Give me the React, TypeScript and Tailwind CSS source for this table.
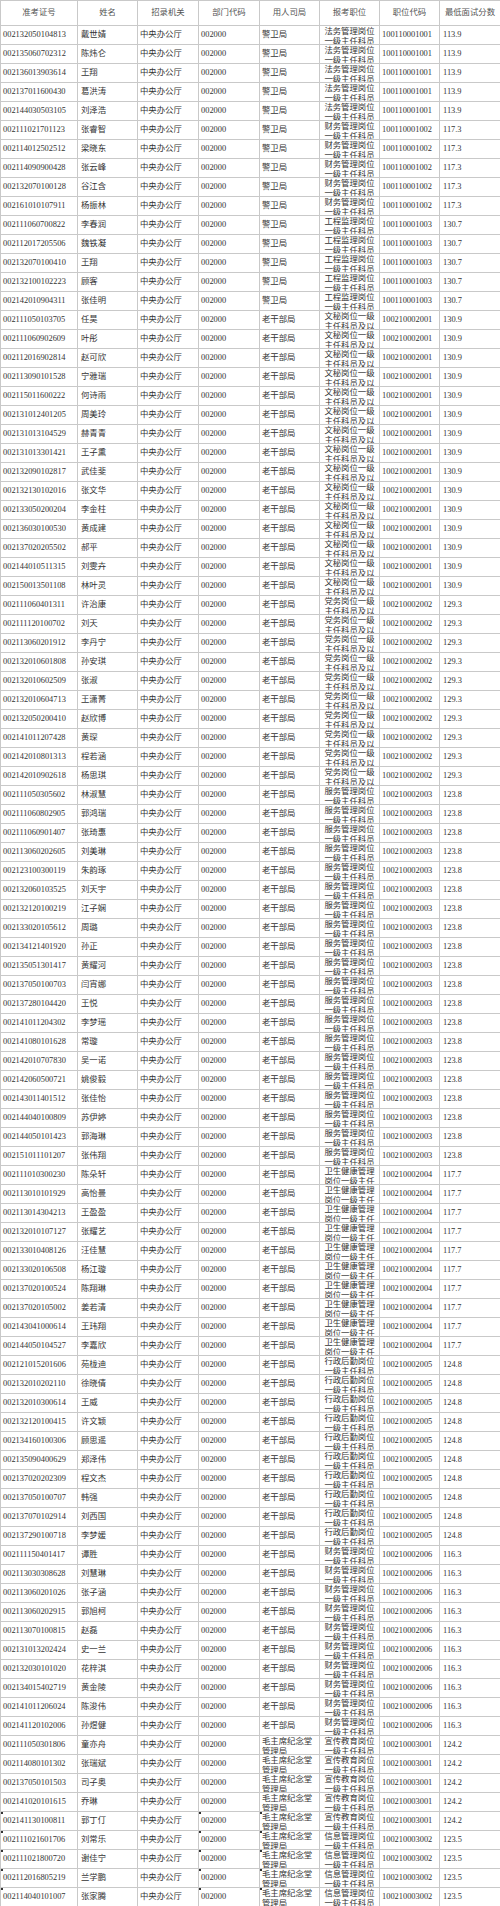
const COLS = 'grid grid-cols-[77px_60px_61px_61px_60px_60px_60px_61px]'

const HEAD = ['准考证号', '姓名', '招录机关', '部门代码', '用人司局', '报考职位', '职位代码', '最低面试分数']

type Group = {
  bureau: string
  post: string
  code: string
  score: string
  people: [string, string][]
}

const GROUPS: Group[] = [
  {
    bureau: '警卫局',
    post: '法务管理岗位一级主任科员',
    code: '100110001001',
    score: '113.9',
    people: [
      ['002132050104813', '戴世婧'],
      ['002135060702312', '陈炜仑'],
      ['002136013903614', '王翔'],
      ['002137011600430', '葛洪涛'],
      ['002144030503105', '刘泽浩'],
    ],
  },
  {
    bureau: '警卫局',
    post: '财务管理岗位一级主任科员',
    code: '100110001002',
    score: '117.3',
    people: [
      ['002111021701123', '张睿智'],
      ['002114012502512', '梁晓东'],
      ['002114090900428', '张云峰'],
      ['002132070100128', '谷江含'],
      ['002161010107911', '杨振林'],
    ],
  },
  {
    bureau: '警卫局',
    post: '工程监理岗位一级主任科员',
    code: '100110001003',
    score: '130.7',
    people: [
      ['002111060700822', '李春润'],
      ['002112017205506', '魏铁凝'],
      ['002132070100410', '王翔'],
      ['002132100102223', '顾客'],
      ['002142010904311', '张佳明'],
    ],
  },
  {
    bureau: '老干部局',
    post: '文秘岗位一级主任科员及以下',
    code: '100210002001',
    score: '130.9',
    people: [
      ['002111050103705', '任昊'],
      ['002111060902609', '叶彤'],
      ['002112016902814', '赵可欣'],
      ['002113090101528', '宁雅瑞'],
      ['002115011600222', '何诗雨'],
      ['002131012401205', '周美玲'],
      ['002131013104529', '赫青青'],
      ['002131013301421', '王子熏'],
      ['002132090102817', '武佳斐'],
      ['002132130102016', '张文华'],
      ['002133050200204', '李金柱'],
      ['002136030100530', '黄成建'],
      ['002137020205502', '郝平'],
      ['002144010511315', '刘雯卉'],
      ['002150013501108', '林叶灵'],
    ],
  },
  {
    bureau: '老干部局',
    post: '党务岗位一级主任科员及以下',
    code: '100210002002',
    score: '129.3',
    people: [
      ['002111060401311', '许治康'],
      ['002111120100702', '刘天'],
      ['002113060201912', '李丹宁'],
      ['002132010601808', '孙安琪'],
      ['002132010602509', '张淑'],
      ['002132010604713', '王潇菁'],
      ['002132050200410', '赵欣博'],
      ['002141011207428', '黄琛'],
      ['002142010801313', '程若涵'],
      ['002142010902618', '杨思琪'],
    ],
  },
  {
    bureau: '老干部局',
    post: '服务管理岗位一级主任科员',
    code: '100210002003',
    score: '123.8',
    people: [
      ['002111050305602', '林淑慧'],
      ['002111060802905', '郭鸿瑞'],
      ['002111060901407', '张琦惠'],
      ['002113060202605', '刘美琳'],
      ['002123100300119', '朱韵琢'],
      ['002132060103525', '刘天宇'],
      ['002132120100219', '江子娴'],
      ['002133020105612', '周璐'],
      ['002134121401920', '孙正'],
      ['002135051301417', '黄耀河'],
      ['002137050100703', '闫宵娜'],
      ['002137280104420', '王悦'],
      ['002141011204302', '李梦瑶'],
      ['002141080101628', '常璇'],
      ['002142010707830', '吴一诺'],
      ['002142060500721', '姚俊毅'],
      ['002143011401512', '张佳怡'],
      ['002144040100809', '苏伊婷'],
      ['002144050101423', '郭海琳'],
      ['002151011101207', '张伟翔'],
    ],
  },
  {
    bureau: '老干部局',
    post: '卫生健康管理岗位一级主任科员',
    code: '100210002004',
    score: '117.7',
    people: [
      ['002111010300230', '陈朵轩'],
      ['002113010101929', '高怡曼'],
      ['002113014304213', '王盈盈'],
      ['002132010107127', '张耀艺'],
      ['002133010408126', '汪佳慧'],
      ['002133020106508', '杨江璇'],
      ['002137020100524', '陈翔琳'],
      ['002137020105002', '姜若清'],
      ['002143041000614', '王玮翔'],
      ['002144050104527', '李嘉欣'],
    ],
  },
  {
    bureau: '老干部局',
    post: '行政后勤岗位一级主任科员',
    code: '100210002005',
    score: '124.8',
    people: [
      ['002121015201606', '苑栊迪'],
      ['002132010202110', '徐晓倩'],
      ['002132010300614', '王威'],
      ['002132120100415', '许文颖'],
      ['002134160100306', '顾思遥'],
      ['002135090400629', '郑泽伟'],
      ['002137020202309', '程文杰'],
      ['002137050100707', '韩强'],
      ['002137070102914', '刘西国'],
      ['002137290100718', '李梦媛'],
    ],
  },
  {
    bureau: '老干部局',
    post: '财务管理岗位一级主任科员',
    code: '100210002006',
    score: '116.3',
    people: [
      ['002111150401417', '谭胜'],
      ['002113030308628', '刘慧琳'],
      ['002113060201026', '张子涵'],
      ['002113060202915', '郭旭柯'],
      ['002113070100815', '赵磊'],
      ['002131013202424', '史一兰'],
      ['002132030101020', '花梓淇'],
      ['002134015402719', '黄金陵'],
      ['002141011206024', '陈浚伟'],
      ['002141120102006', '孙煜健'],
    ],
  },
  {
    bureau: '毛主席纪念堂管理局',
    post: '宣传教育岗位一级主任科员',
    code: '100210003001',
    score: '124.2',
    people: [
      ['002111050301806', '童亦舟'],
      ['002114080101302', '张瑞斌'],
      ['002137050101503', '司子奥'],
      ['002141020101615', '乔琳'],
      ['002141130100811', '郭丁仃'],
    ],
  },
  {
    bureau: '毛主席纪念堂管理局',
    post: '信息管理岗位一级主任科员',
    code: '100210003002',
    score: '123.5',
    people: [
      ['002111021601706', '刘常乐'],
      ['002111021800720', '谢佳宁'],
      ['002112016805219', '兰学鹏'],
      ['002114040101007', '张家腾'],
    ],
  },
]

const ROWS = GROUPS.flatMap((g) =>
  g.people.map(([id, name]) => ({ id, name, bureau: g.bureau, post: g.post, code: g.code, score: g.score })),
)

// the last few rows carry the little "number stored as text" marks
const MARKED_FROM = ROWS.length - 5

const cell = 'relative h-[19px] border-r border-b border-[#c9c9c9] overflow-hidden'
const line = `${cell} flex items-center whitespace-nowrap`

const Mark = () => <span className="absolute left-0 top-0 h-[2px] w-[2px] bg-[#333]" />

const App = () => {
  return (
    <div
      className="w-[500px] bg-white text-[8.4px] text-[#333]"
      style={{ fontFamily: '"Liberation Serif", "Noto Sans CJK SC", serif' }}
    >
      <div className="border-l border-t border-[#c9c9c9]">
        <div className={COLS}>
          {HEAD.map((h) => (
            <div
              key={h}
              className="h-[25px] border-r border-b border-[#c9c9c9] flex items-center justify-center whitespace-nowrap text-[#555]"
            >
              {h}
            </div>
          ))}
        </div>
        {ROWS.map((r, i) => {
          const marked = i >= MARKED_FROM
          return (
            <div key={r.id} className={COLS}>
              <div className={`${line} pl-[2px]`}>
                {marked ? <Mark /> : null}
                {r.id}
              </div>
              <div className={`${line} pl-[3px]`}>{r.name}</div>
              <div className={`${line} pl-[2px]`}>中央办公厅</div>
              <div className={`${line} pl-[2px]`}>
                {marked ? <Mark /> : null}
                002000
              </div>
              {r.bureau.length > 6 ? (
                <div className={`${cell} pl-[2px] pt-[1px] leading-[10px]`}>
                  {marked ? <Mark /> : null}
                  {r.bureau}
                </div>
              ) : (
                <div className={`${line} pl-[2px]`}>{r.bureau}</div>
              )}
              <div className={`${cell} px-[3px] pt-[1px] leading-[10px] text-center`}>{r.post}</div>
              <div className={`${line} pl-[2px]`}>{r.code}</div>
              <div className={`${line} pl-[3px]`}>{r.score}</div>
            </div>
          )
        })}
      </div>
    </div>
  )
}

export default App
